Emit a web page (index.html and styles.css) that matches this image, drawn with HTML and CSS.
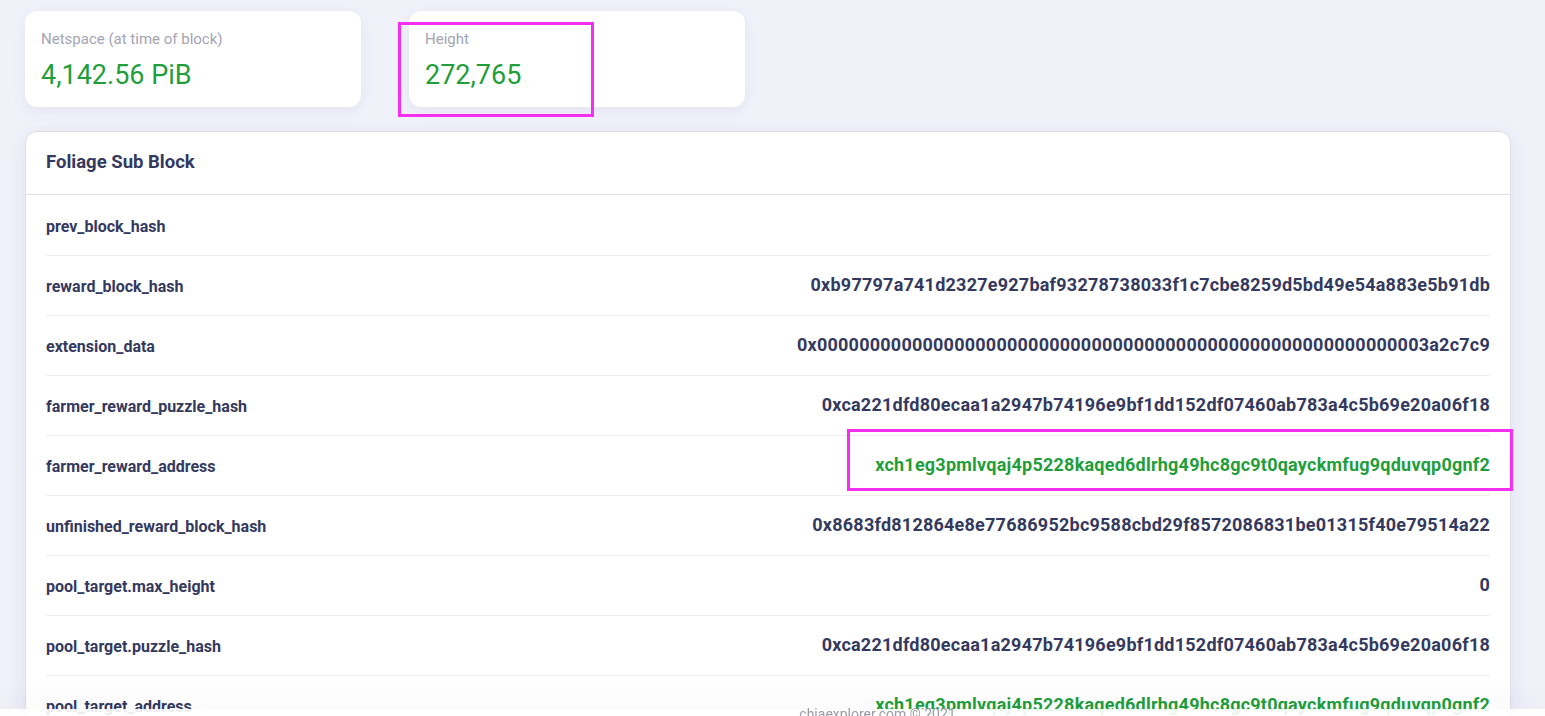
FILE: index.html
```html
<!DOCTYPE html>
<html lang="en">
<head>
<meta charset="utf-8">
<title>Block</title>
<link rel="stylesheet" href="styles.css">
</head>
<body>
<div class="page">
  <div class="stats">
    <div class="stat-card">
      <div class="stat-label">Netspace (at time of block)</div>
      <div class="stat-value">4,142.56 PiB</div>
    </div>
    <div class="stat-card">
      <div class="stat-label">Height</div>
      <div class="stat-value">272,765</div>
    </div>
  </div>

  <div class="card">
    <div class="card-header"><h4>Foliage Sub Block</h4></div>
    <div class="card-body">
      <div class="row"><span class="key">prev_block_hash</span><span class="val"></span></div>
      <div class="row"><span class="key">reward_block_hash</span><span class="val">0xb97797a741d2327e927baf93278738033f1c7cbe8259d5bd49e54a883e5b91db</span></div>
      <div class="row"><span class="key">extension_data</span><span class="val">0x0000000000000000000000000000000000000000000000000000000003a2c7c9</span></div>
      <div class="row"><span class="key">farmer_reward_puzzle_hash</span><span class="val">0xca221dfd80ecaa1a2947b74196e9bf1dd152df07460ab783a4c5b69e20a06f18</span></div>
      <div class="row"><span class="key">farmer_reward_address</span><span class="val green">xch1eg3pmlvqaj4p5228kaqed6dlrhg49hc8gc9t0qayckmfug9qduvqp0gnf2</span></div>
      <div class="row"><span class="key">unfinished_reward_block_hash</span><span class="val">0x8683fd812864e8e77686952bc9588cbd29f8572086831be01315f40e79514a22</span></div>
      <div class="row"><span class="key">pool_target.max_height</span><span class="val">0</span></div>
      <div class="row"><span class="key">pool_target.puzzle_hash</span><span class="val">0xca221dfd80ecaa1a2947b74196e9bf1dd152df07460ab783a4c5b69e20a06f18</span></div>
      <div class="row"><span class="key">pool_target_address</span><span class="val green">xch1eg3pmlvqaj4p5228kaqed6dlrhg49hc8gc9t0qayckmfug9qduvqp0gnf2</span></div>
      <div class="row"><span class="key">pool_signature</span><span class="val"></span></div>
    </div>
  </div>
</div>

<div class="highlight hl-height"></div>
<div class="highlight hl-address"></div>

<footer class="footer"><span class="footer-text">chiaexplorer.com © 2021</span></footer>
</body>
</html>
```

FILE: styles.css
```css
html, body {
  margin: 0;
  padding: 0;
}
body {
  background: #f1f1fa;
  font-family: Roboto, "Liberation Sans", sans-serif;
  color: #34395e;
  overflow: hidden;
}
.page {
  padding: 11px 34px 40px 25px;
}
.stats {
  display: flex;
  gap: 48px;
}
.stat-card {
  width: 336px;
  height: 96px;
  box-sizing: border-box;
  background: #fff;
  border-radius: 12px;
  padding: 19px 16px 0 16px;
  box-shadow: 0 4px 14px rgba(120, 120, 180, 0.10);
}
.stat-label {
  font-size: 15px;
  line-height: 18px;
  color: #a3a5b3;
}
.stat-value {
  margin-top: 11px;
  font-size: 27px;
  line-height: 32px;
  color: #1f9e3b;
}
.card {
  margin-top: 24px;
  background: #fff;
  border: 1px solid #dedee8;
  border-radius: 12px;
  box-shadow: 0 4px 18px rgba(120, 120, 180, 0.12);
}
.card-header {
  height: 63px;
  display: flex;
  align-items: center;
  padding: 0 20px 3px 20px;
  box-sizing: border-box;
  border-bottom: 1px solid #dedee4;
}
.card-header h4 {
  margin: 0;
  font-size: 18.5px;
  font-weight: 700;
  line-height: 22px;
  color: #34395e;
}
.card-body {
  padding: 1px 20px 0 20px;
}
.row {
  height: 60px;
  display: flex;
  align-items: center;
  justify-content: space-between;
  border-bottom: 1px solid #ededf5;
  box-sizing: border-box;
}
.key {
  font-size: 16px;
  font-weight: 700;
  color: #34395e;
  padding-top: 1px;
}
.val {
  font-size: 18px;
  font-weight: 700;
  letter-spacing: 0.23px;
  color: #34395e;
  padding-bottom: 2px;
}
.val.green {
  color: #1f9e3b;
}
.highlight {
  position: absolute;
  border: 3px solid #f52ef0;
  box-sizing: border-box;
  pointer-events: none;
}
.hl-height {
  left: 398px;
  top: 22px;
  width: 196px;
  height: 95px;
}
.hl-address {
  left: 847px;
  top: 429px;
  width: 666px;
  height: 62px;
}
.footer {
  position: fixed;
  left: 0;
  right: 0;
  bottom: 0;
  height: 7px;
  background: rgba(255, 255, 255, 0.9);
  box-shadow: 0 -8px 26px rgba(60, 60, 90, 0.07);
  text-align: center;
  padding-left: 210px;
  box-sizing: border-box;
}
.footer-text {
  display: inline-block;
  font-size: 14px;
  line-height: 10px;
  color: #9a9aa6;
  vertical-align: top;
}
```
